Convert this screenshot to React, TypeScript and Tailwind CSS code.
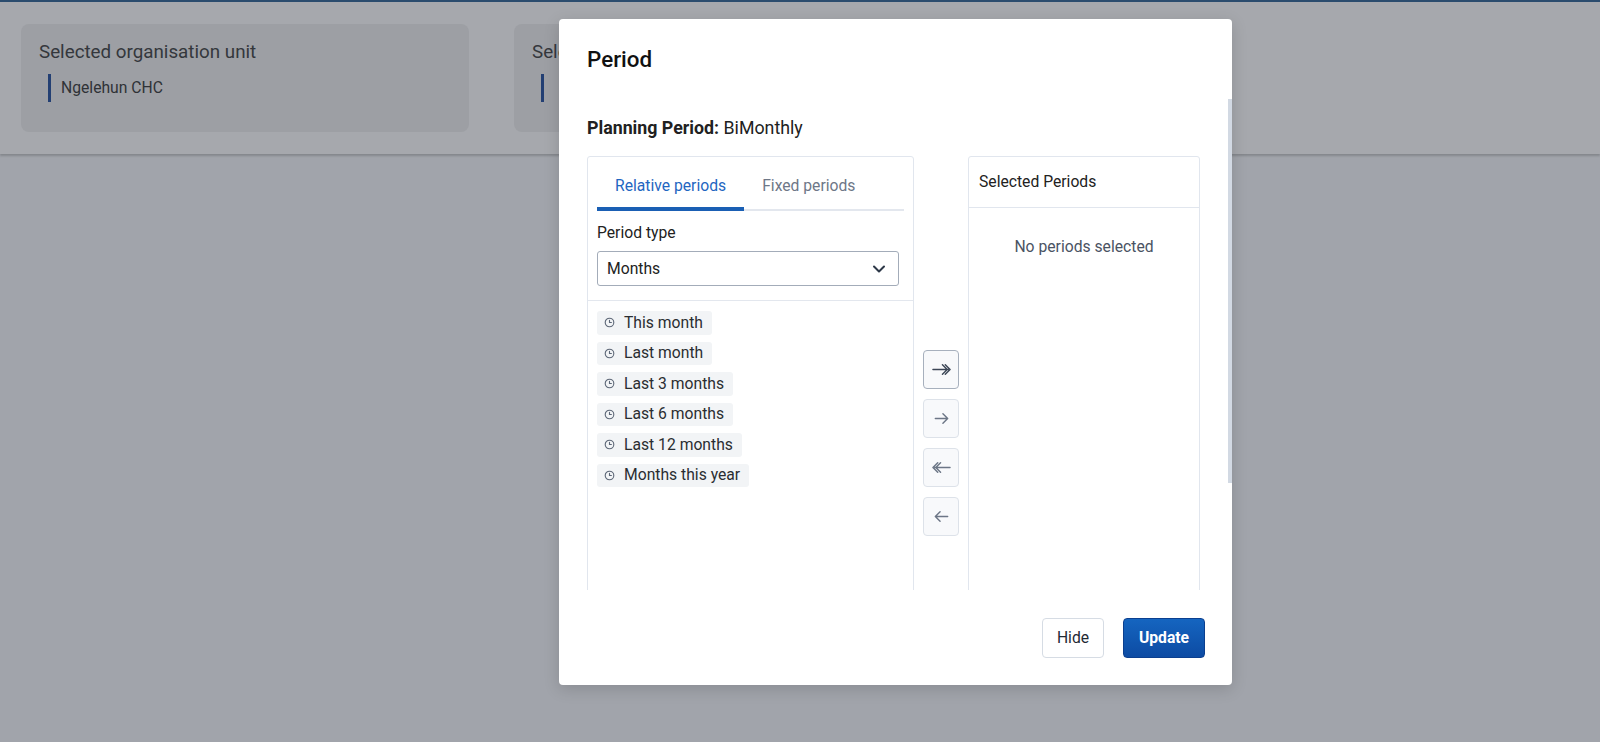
import { ChevronDown } from 'lucide-react';

const relativePeriods = ['This month', 'Last month', 'Last 3 months', 'Last 6 months', 'Last 12 months', 'Months this year'];

export default function App() {
  return (
    <div className="relative w-full h-[742px] overflow-hidden bg-[#a1a4ab] font-[Roboto,sans-serif]">
      {/* Page header with org unit / period summary */}
      <div className="h-[154px] border-t-2 border-[#2b4c6e] bg-[#a6a8ad] shadow-[0_2px_2px_rgba(0,0,0,0.18)] flex gap-[45px] pt-[22px] px-[21px]">
        <SummaryCard title="Selected organisation unit" value="Ngelehun CHC" />
        <SummaryCard title="Selected period" value="" />
      </div>

      {/* Period modal */}
      <div className="absolute left-[559px] top-[19px] w-[673px] h-[666px] bg-white rounded-[4px] shadow-[0_4px_16px_rgba(0,0,0,0.15)] flex flex-col">
        <div className="h-[80px] pt-[26px] px-[28px]">
          <h2 className="text-[22.4px] leading-[28px] font-medium text-[#111]">Period</h2>
        </div>

        <div className="relative h-[491px] overflow-hidden px-[28px]">
          <div className="h-[24px] mt-[17px] mb-[16px] text-[17.8px] leading-[24px] text-[#212121]">
            <span className="font-bold">Planning Period:</span> BiMonthly
          </div>

          <div className="flex">
            <PeriodSource />
            <TransferButtons />
            <div className="w-[232px] h-[574px] border border-[#e1e6ee] rounded-[3px] flex flex-col">
              <div className="h-[51px] border-b border-[#e1e6ee] px-[10px] flex items-center text-[15.7px] text-[#222]">
                Selected Periods
              </div>
              <p className="mt-[29px] text-center text-[15.7px] leading-[20px] text-[#4a5363]">No periods selected</p>
            </div>
          </div>

          {/* scrollbar thumb */}
          <div className="absolute right-0 top-0 w-[4px] h-[384px] bg-[#d2d9e3]" />
        </div>

        <div className="flex justify-end gap-[19px] pt-[28px] pr-[27px]">
          <button className="w-[62px] h-[40px] rounded-[4px] border border-[#d6dce4] bg-white text-[15.7px] text-[#1f2933]">
            Hide
          </button>
          <button className="w-[82px] h-[40px] rounded-[4px] border border-[#0b3f8f] bg-gradient-to-b from-[#1565c0] to-[#0d4ba3] text-[15.7px] font-bold text-white">
            Update
          </button>
        </div>
      </div>
    </div>
  );
}

function SummaryCard({ title, value }: { title: string; value: string }) {
  return (
    <div className="w-[448px] h-[108px] rounded-[8px] bg-[#9d9fa4] pt-[16px] pl-[18px]">
      <div className="text-[18.8px] leading-[24px] text-[#34373c]">{title}</div>
      <div className="mt-[10px] ml-[9px] h-[28px] border-l-[3px] border-[#233f73] pl-[10px] flex items-center text-[15.7px] text-[#2f3236]">
        {value}
      </div>
    </div>
  );
}

function PeriodSource() {
  return (
    <div className="w-[327px] h-[574px] border border-[#e1e6ee] rounded-[3px] flex flex-col">
      <div className="px-[9px] pt-[9px]">
        <div className="flex border-b-2 border-[#e3e7ee]">
          <div className="-mb-[2px] px-[18px] pt-[10px] pb-[11px] border-b-4 border-[#1a5fb4] text-[15.7px] leading-[20px] text-[#1f66c1]">
            Relative periods
          </div>
          <div className="px-[18px] pt-[10px] pb-[11px] text-[15.7px] leading-[20px] text-[#6e7787]">Fixed periods</div>
        </div>
        <div className="mt-[12px] text-[15.7px] leading-[20px] text-[#222]">Period type</div>
        <div className="mt-[8px] mr-[5px] h-[35px] border border-[#a3acb9] rounded-[3px] px-[9px] flex items-center justify-between text-[15.7px] text-[#222]">
          <span>Months</span>
          <ChevronDown size={20} strokeWidth={2.4} className="text-[#2d3848]" />
        </div>
      </div>
      <div className="mt-[14px] border-t border-[#e3e7ee] px-[9px] pt-[10px] flex flex-col items-start gap-[7px]">
        {relativePeriods.map((p) => (
          <div key={p} className="h-[23.5px] flex items-center gap-[9px] pl-[7px] pr-[9px] rounded-[3px] bg-[#f2f4f6] text-[15.7px] text-[#2a2d31]">
            <ClockIcon />
            <span>{p}</span>
          </div>
        ))}
      </div>
    </div>
  );
}

function ClockIcon() {
  return (
    <svg width="11" height="11" viewBox="0 0 11 11" fill="none" stroke="#5c6676" strokeWidth="1.1">
      <circle cx="5.5" cy="5.5" r="4.3" />
      <path d="M5.5 3.2v2.3h1.9" strokeLinecap="round" />
    </svg>
  );
}

function TransferButtons() {
  return (
    <div className="w-[54px] h-[574px] flex flex-col items-center justify-center gap-[10px]">
      <TransferButton active>
        <path d="M1 10h16M11 5l5 5-5 5M14 5l5 5-5 5" />
      </TransferButton>
      <TransferButton>
        <path d="M3.5 10h13M11.5 5l5 5-5 5" />
      </TransferButton>
      <TransferButton>
        <path d="M19 10H3M9 5l-5 5 5 5M6 5l-5 5 5 5" />
      </TransferButton>
      <TransferButton>
        <path d="M16.5 10h-13M8.5 5l-5 5 5 5" />
      </TransferButton>
    </div>
  );
}

function TransferButton({ children, active = false }: { children: React.ReactNode; active?: boolean }) {
  return (
    <div
      className={`w-[36px] h-[39px] rounded-[4px] border bg-[#f8f9fb] flex items-center justify-center ${
        active ? 'border-[#a7b0bd] text-[#3c4656]' : 'border-[#dde2e9] text-[#6c7686]'
      }`}
    >
      <svg width="19" height="19" viewBox="0 0 20 20" fill="none" stroke="currentColor" strokeWidth="1.5" strokeLinecap="round" strokeLinejoin="round">
        {children}
      </svg>
    </div>
  );
}
